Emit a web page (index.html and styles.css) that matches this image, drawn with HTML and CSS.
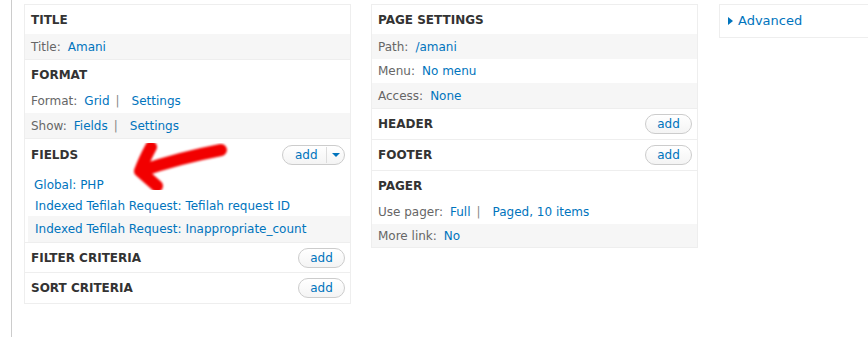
FILE: index.html
```html
<!DOCTYPE html>
<html lang="en">
<head>
    <meta charset="UTF-8">
    <meta name="viewport" content="width=device-width, initial-scale=1.0">
    <title>Views UI - Amani</title>
    <link rel="stylesheet" href="styles.css">
</head>
<body>
    <div class="page">
        <div class="columns">
            <!-- First column -->
            <div class="column">
                <div class="section">
                    <div class="section-title">Title</div>
                    <div class="row odd"><span class="label">Title:</span><a href="#">Amani</a></div>
                </div>
                <div class="section">
                    <div class="section-title title-short">Format</div>
                    <div class="row"><span class="label">Format:</span><a href="#">Grid</a><span class="sep">|</span><a class="settings" href="#">Settings</a></div>
                    <div class="row odd"><span class="label">Show:</span><a href="#">Fields</a><span class="sep">|</span><a class="settings" href="#">Settings</a></div>
                </div>
                <div class="section">
                    <div class="section-title title-tall">Fields
                        <span class="add-button has-menu">add<span class="menu-toggle"></span></span>
                    </div>
                    <div class="field-list">
                        <div class="field first"><a href="#">Global: PHP</a></div>
                        <div class="field"><a href="#">Indexed Tefilah Request: Tefilah request ID</a></div>
                        <div class="field odd last"><a href="#">Indexed Tefilah Request: Inappropriate_count</a></div>
                    </div>
                </div>
                <div class="section">
                    <div class="section-title">Filter criteria <span class="add-button">add</span></div>
                </div>
                <div class="section">
                    <div class="section-title title-bottom">Sort criteria <span class="add-button">add</span></div>
                </div>
            </div>

            <!-- Second column -->
            <div class="column">
                <div class="section">
                    <div class="section-title">Page settings</div>
                    <div class="row odd"><span class="label">Path:</span><a href="#">/amani</a></div>
                    <div class="row row-short"><span class="label">Menu:</span><a href="#">No menu</a></div>
                    <div class="row odd"><span class="label">Access:</span><a href="#">None</a></div>
                </div>
                <div class="section">
                    <div class="section-title title-bar">Header <span class="add-button">add</span></div>
                </div>
                <div class="section">
                    <div class="section-title title-bar">Footer <span class="add-button">add</span></div>
                </div>
                <div class="section">
                    <div class="section-title title-pager">Pager</div>
                    <div class="row"><span class="label">Use pager:</span><a href="#">Full</a><span class="sep">|</span><a class="settings" href="#">Paged, 10 items</a></div>
                    <div class="row odd row-last"><span class="label">More link:</span><a href="#">No</a></div>
                </div>
            </div>

            <!-- Third column -->
            <div class="column column-side">
                <div class="advanced"><span class="arrow-right"></span><a href="#">Advanced</a></div>
            </div>
        </div>

        <!-- red annotation drawn over the page -->
        <svg class="annotation" width="868" height="337" viewBox="0 0 868 337">
            <defs>
                <filter id="soft"><feGaussianBlur stdDeviation="1.2"/></filter>
            </defs>
            <g fill="none" stroke="#f20000" stroke-width="12" stroke-linecap="round" stroke-linejoin="round" filter="url(#soft)">
                <path d="M221 150 C200 154 170 161 141 171"/>
                <path d="M151 147 Q144 160 140 171 Q149 179 157 186"/>
            </g>
        </svg>
    </div>
</body>
</html>
```

FILE: styles.css
```css
body {
    margin: 0;
    font-family: "DejaVu Sans", sans-serif;
    font-size: 12px;
    color: #333;
    background: #fff;
    overflow: hidden;
}
a {
    color: #0074bd;
    text-decoration: none;
}
.page {
    position: relative;
    height: 337px;
    margin-left: 11px;
    border-left: 1px solid #ccc;
    padding: 4px 0 0 12px;
    box-sizing: border-box;
}
.columns {
    display: flex;
    align-items: flex-start;
    gap: 20px;
}
.column {
    width: 327px;
    border: 1px solid #eee;
    box-sizing: border-box;
    flex-shrink: 0;
}
.column-side {
    width: 180px;
    margin-left: 1px;
}
.section + .section {
    border-top: 1px solid #eee;
}
.section-title {
    display: flex;
    justify-content: space-between;
    align-items: center;
    height: 29px;
    padding: 0 5px 0 6px;
    font-weight: bold;
    text-transform: uppercase;
    color: #333;
}
.title-short {
    height: 28px;
    padding-top: 2px;
    box-sizing: border-box;
}
.title-pager {
    height: 28px;
    padding-top: 1px;
    box-sizing: border-box;
}
.title-tall {
    height: 31px;
}
.title-bar {
    height: 30px;
}
.title-bottom {
    height: 30px;
}
.row {
    display: flex;
    align-items: center;
    height: 25px;
    padding-left: 6px;
}
.row-short {
    height: 24px;
}
.row-last {
    height: 23px;
}
.odd {
    background-color: #f6f6f6;
}
.label {
    color: #666;
    margin-right: 7px;
}
.sep {
    color: #888;
    margin: 0 6px;
}
.settings {
    margin-left: 6px;
}
.field-list {
    padding: 4px 0 0 3px;
}
.field {
    display: flex;
    align-items: center;
    height: 21px;
    padding-left: 7px;
}
.field.first {
    padding-left: 6px;
}
.field.last {
    height: 26px;
}
.add-button {
    display: inline-flex;
    align-items: center;
    justify-content: center;
    width: 47px;
    height: 20px;
    box-sizing: border-box;
    border: 1px solid #ccc;
    border-radius: 10px;
    background: linear-gradient(#fff, #f4f4f4);
    color: #0074bd;
    font-weight: normal;
    text-transform: none;
    font-size: 12px;
}
.has-menu {
    width: 63px;
    justify-content: flex-start;
    padding-left: 12px;
}
.menu-toggle {
    position: relative;
    margin-left: 8px;
    width: 16px;
    height: 16px;
    border-left: 1px solid #ddd;
}
.menu-toggle::after {
    content: "";
    position: absolute;
    left: 5px;
    top: 6px;
    border-left: 4px solid transparent;
    border-right: 4px solid transparent;
    border-top: 4px solid #0074bd;
}
.advanced {
    display: flex;
    align-items: center;
    height: 31px;
    padding: 0 0 1px 8px;
    font-size: 13px;
}
.arrow-right {
    width: 0;
    height: 0;
    border-top: 4px solid transparent;
    border-bottom: 4px solid transparent;
    border-left: 5px solid #0074bd;
    margin-right: 5px;
}
.annotation {
    position: absolute;
    left: -12px;
    top: 0;
    pointer-events: none;
}
```
